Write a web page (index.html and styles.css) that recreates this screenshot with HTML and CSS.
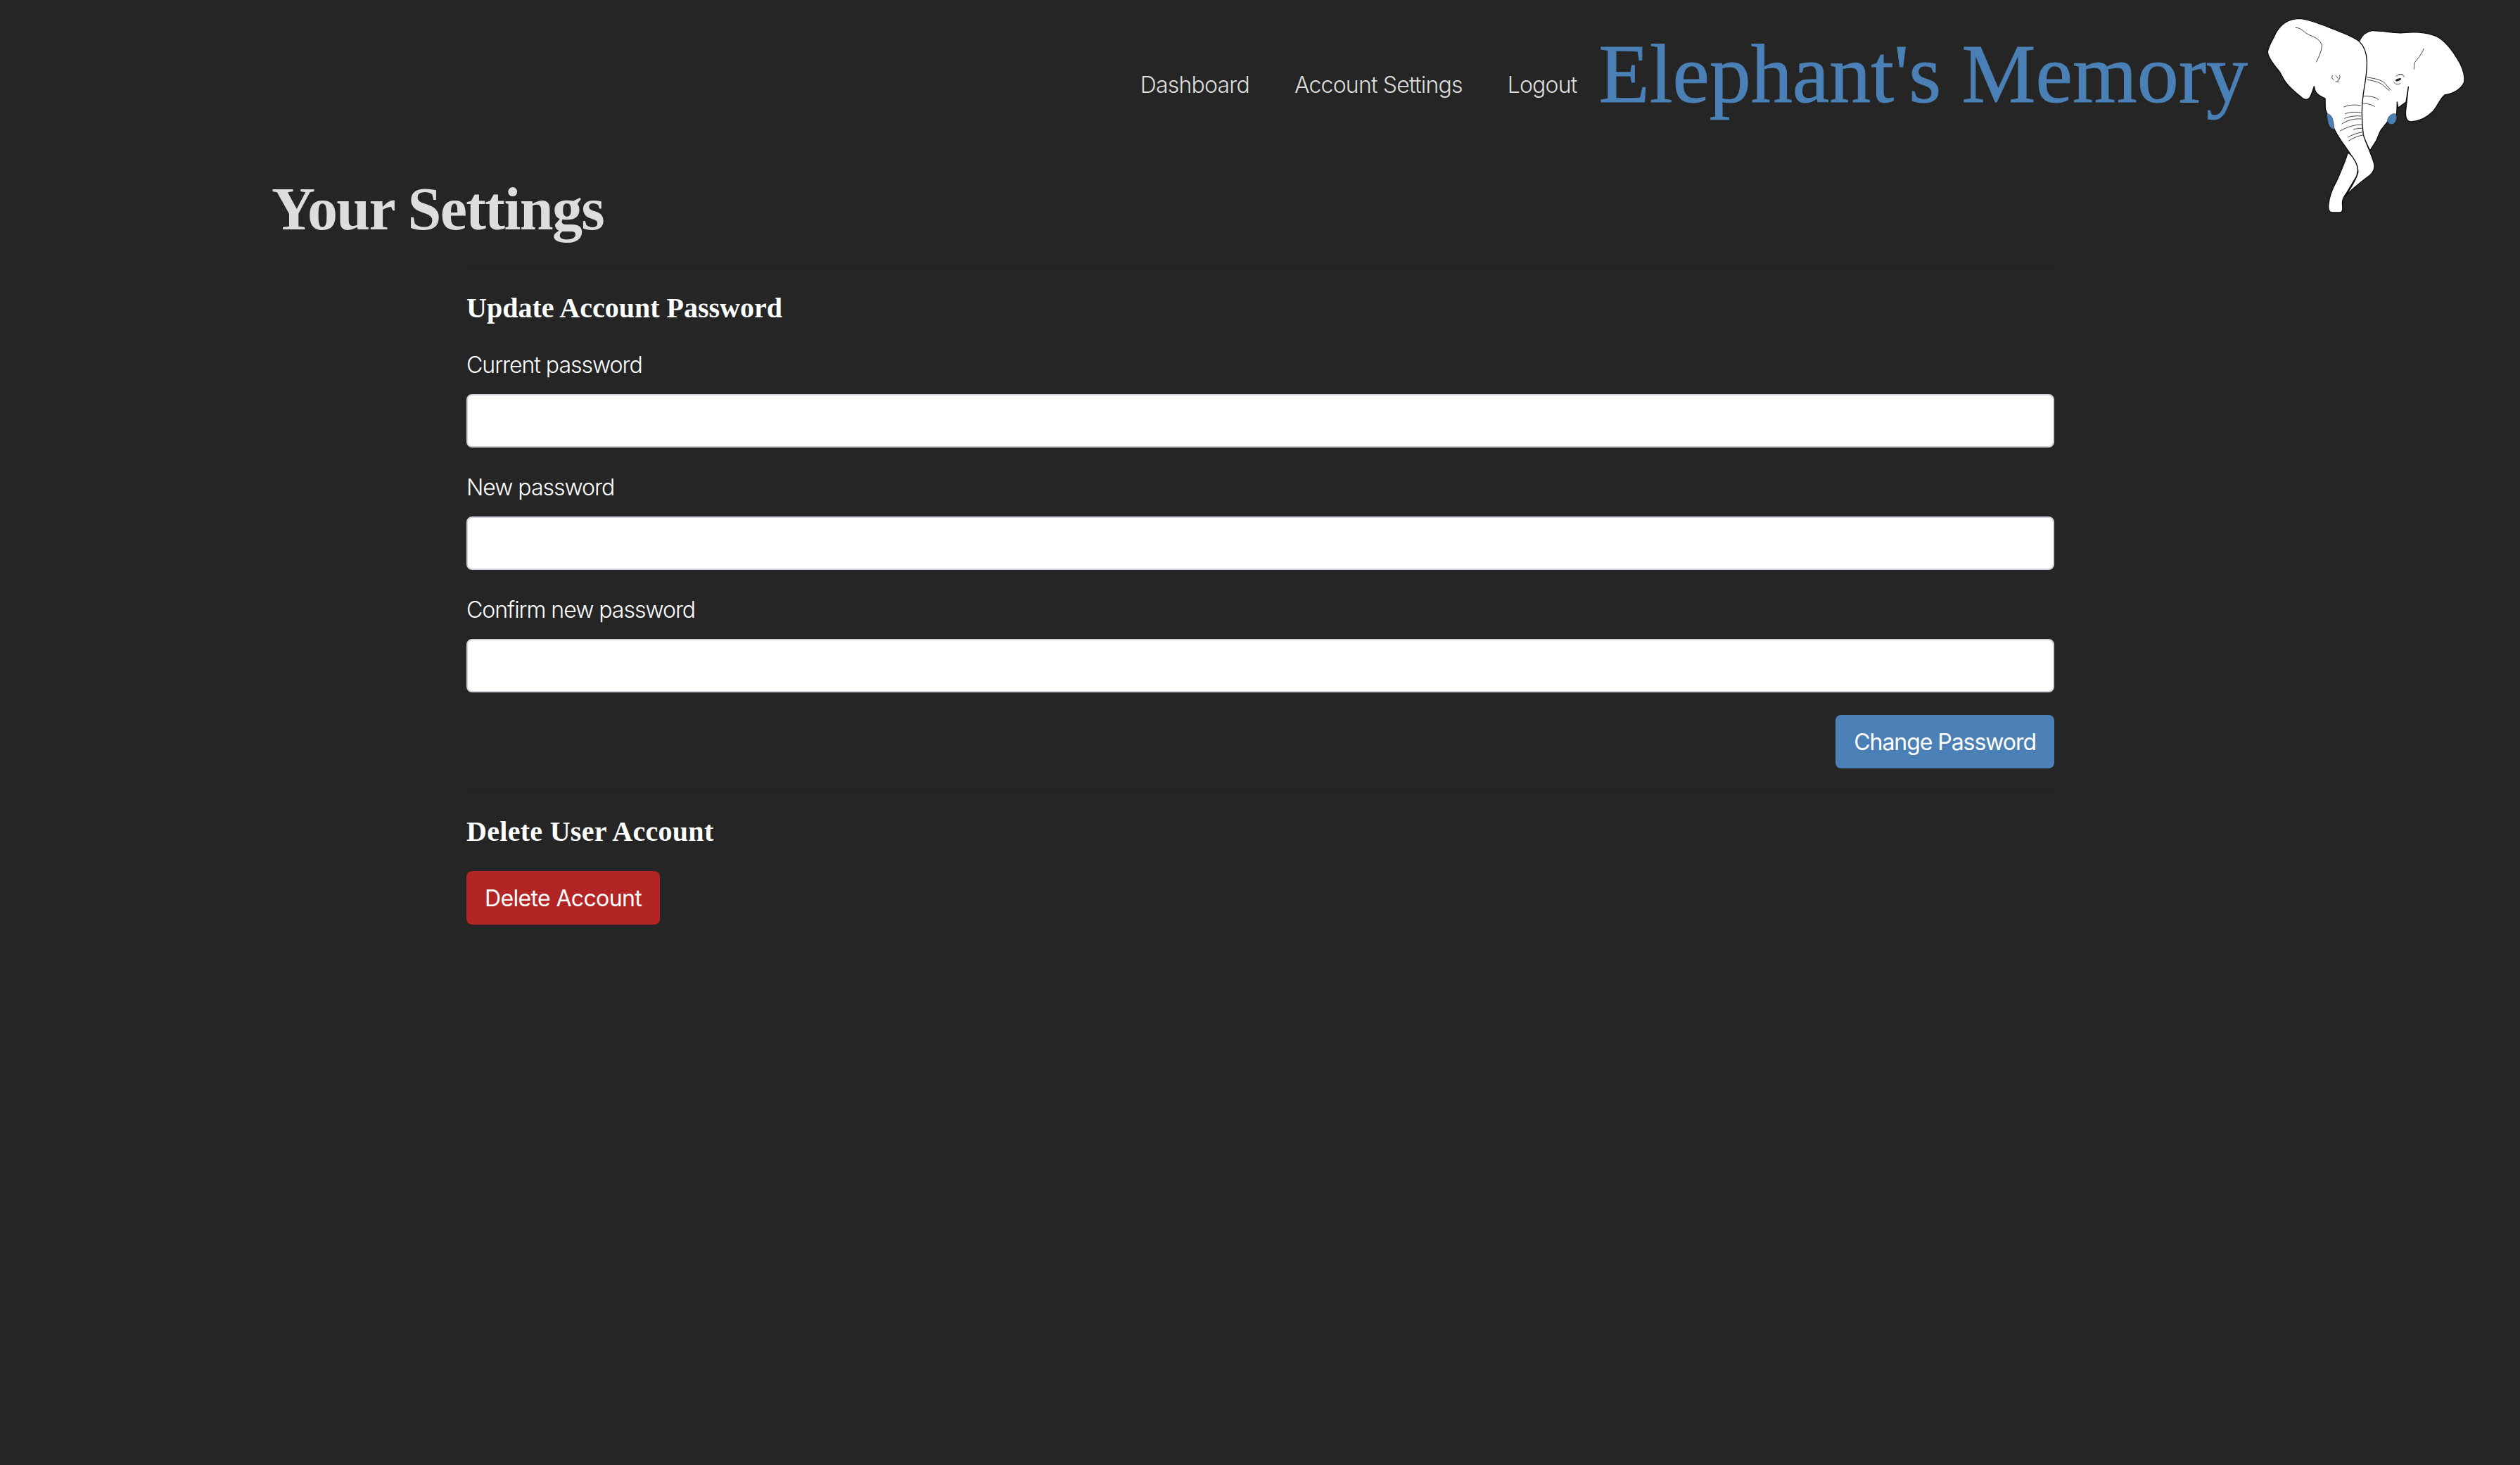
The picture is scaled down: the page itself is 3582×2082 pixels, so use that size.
FILE: index.html
```html
<!DOCTYPE html>
<html lang="en">
<head>
<meta charset="utf-8">
<title>Your Settings</title>
<link rel="stylesheet" href="styles.css">
</head>
<body>
<header class="topbar">
  <nav class="nav">
    <a class="nav-link" href="#">Dashboard</a>
    <a class="nav-link" href="#">Account Settings</a>
    <a class="nav-link" href="#">Logout</a>
  </nav>
  <a class="brand" href="#">Elephant's Memory</a>
  <svg class="logo" viewBox="0 0 1206 960" aria-hidden="true">
    <g class="outline">
      <path d="M520 176C532 152 548 134 575 131C620 130 660 142 705 140C750 136 800 134 850 155C890 175 925 225 950 270C965 300 972 325 968 350C955 380 920 398 885 405C865 420 860 445 835 475C805 505 770 518 742 519C722 518 716 500 719 470L730 370L720 435L686 460L682 435L680 490L640 520L620 546C605 560 600 590 590 605L566 642L500 500Z"/>
      <path d="M472 650C462 685 445 725 425 770C405 805 392 840 389 875C388 895 392 905 405 906L440 906C449 905 451 895 449 875C447 855 450 845 465 825L510 750L520 690Z"/>
      <path d="M130 220C135 190 150 175 165 140C185 105 215 80 265 79C310 82 360 105 405 122C450 140 495 155 520 176C540 195 552 220 553 260C555 310 545 350 538 400C530 450 530 510 538 575C550 615 570 650 583 695C590 720 580 735 565 748C535 770 490 805 462 836C480 805 505 775 515 735C518 705 500 680 478 650C458 620 430 585 415 552L385 490L376 465L375 420C355 410 335 400 332 385L328 368C322 385 318 405 308 418C298 428 285 425 272 413C250 395 225 375 208 352C195 335 190 320 180 305C165 285 130 250 130 220Z"/>
    </g>
    <path class="tusk" d="M383 486C395 485 405 495 409 515C413 530 415 545 412 552C400 550 390 535 387 520C385 505 382 495 383 486Z"/>
    <path class="tusk" d="M641 510C645 492 665 480 677 486C682 500 680 520 665 529C650 532 640 525 641 510Z"/>
    <g class="lines">
      <path d="M250 118C275 118 285 140 310 150C335 160 355 170 362 195C358 220 350 240 338 264"/>
      <path d="M795 208C785 235 770 250 758 265C754 275 755 285 754 295"/>
      <path d="M555 330C590 335 615 340 630 355L655 384"/>
      <path d="M555 340C585 345 605 350 622 363L648 386"/>
      <path d="M537 410C560 408 585 412 602 424"/>
      <path d="M533 441C550 440 570 444 586 454"/>
      <path d="M455 456C475 447 505 445 527 450"/>
      <path d="M461 485C480 477 505 477 526 480"/>
      <path d="M458 505C480 495 505 493 527 495"/>
      <path d="M447 528C470 512 500 505 528 507"/>
      <path d="M440 558C470 540 505 530 532 532"/>
      <path d="M496 552C510 548 522 546 532 547"/>
      <path d="M473 585C495 572 520 565 537 563"/>
      <path d="M476 600C495 587 520 578 540 575"/>
      <path d="M406 322C402 330 405 338 412 340M420 322C426 328 430 333 431 337M437 322C440 332 436 340 428 344M420 348L434 349"/>
      <path d="M678 325C690 315 700 315 708 320M690 318C700 314 708 318 712 328M668 350C675 360 685 362 695 356"/>
    </g>
    <ellipse class="eye" cx="687" cy="340" rx="13" ry="5" transform="rotate(-20 687 340)"/>
  </svg>
</header>
<main class="page">
  <h1 class="page-title">Your Settings</h1>
  <section class="panel">
    <h2 class="panel-title">Update Account Password</h2>
    <form class="form">
      <label class="field"><span class="field-label">Current password</span><input class="input" type="password"></label>
      <label class="field"><span class="field-label">New password</span><input class="input" type="password"></label>
      <label class="field"><span class="field-label">Confirm new password</span><input class="input" type="password"></label>
      <div class="actions"><button class="btn btn-primary" type="button">Change Password</button></div>
    </form>
  </section>
  <section class="panel">
    <h2 class="panel-title">Delete User Account</h2>
    <button class="btn btn-danger" type="button">Delete Account</button>
  </section>
</main>
</body>
</html>
```
FILE: styles.css
```css
* { box-sizing: border-box; }
html, body { margin: 0; height: 100%; }
body {
  background: #252525;
  color: #fff;
  font-family: Inter, "Liberation Sans", sans-serif;
  font-size: 32px;
  overflow: hidden;
}
a { text-decoration: none; }
.topbar {
  display: flex;
  justify-content: flex-end;
  align-items: flex-start;
  height: 247px;
}
.nav { display: flex; margin-top: 101px; margin-right: -1px; }
.nav-link {
  color: #ddd;
  font-weight: 300;
  letter-spacing: -0.8px;
  line-height: 40px;
  padding: 0 32px;
}
.brand {
  color: #4a80b5;
  font-family: "Liberation Serif", serif;
  font-size: 118px;
  line-height: 136px;
  margin-top: 38px;
  white-space: nowrap;
  -webkit-text-stroke: 1px #4a80b5;
}
.logo { width: 402px; height: 320px; margin-left: -15px; flex: none; }
.outline path { fill: #fff; stroke: #0c0c0c; stroke-width: 4; stroke-linejoin: round; }
.tusk { fill: #4a80b5; stroke: #222; stroke-width: 1.5; }
.lines path { fill: none; stroke: #444; stroke-width: 3; stroke-linecap: round; }
.eye { fill: #222; }
.page { width: 2814px; margin: 0 auto; }
.page-title {
  margin: 0;
  padding-left: 2px;
  color: #ddd;
  font-family: "Liberation Serif", serif;
  font-size: 86px;
  font-weight: 700;
  letter-spacing: -1.6px;
  line-height: 100px;
}
.panel {
  width: 2257px;
  margin: 33px 0 0 279px;
  padding-top: 32px;
  border-top: 2px solid #222;
}
.panel + .panel { margin-top: 32px; }
.panel-title {
  margin: 0 0 32px;
  font-family: "Liberation Serif", serif;
  font-size: 40px;
  font-weight: 700;
  line-height: 48px;
}
.panel + .panel .panel-title { letter-spacing: 0.3px; }
.form { display: flex; flex-direction: column; }
.field { display: flex; flex-direction: column; margin-bottom: 32px; }
.field-label { font-weight: 300; letter-spacing: -1px; line-height: 48px; padding-top: 1px; margin-bottom: 17px; }
.input {
  height: 76px;
  background: #fff;
  border: 2px solid #ced4da;
  border-radius: 8px;
  padding: 12px 24px;
}
.actions { display: flex; justify-content: flex-end; }
.btn {
  height: 76px;
  border: 2px solid transparent;
  border-radius: 8px;
  padding: 0 24px;
  color: #fff;
  font: 400 32px Inter, "Liberation Sans", sans-serif;
  letter-spacing: -0.65px;
}
.btn-primary { background: #4a80b5; letter-spacing: -1.05px; }
.btn-danger { background: #b32525; }
```
